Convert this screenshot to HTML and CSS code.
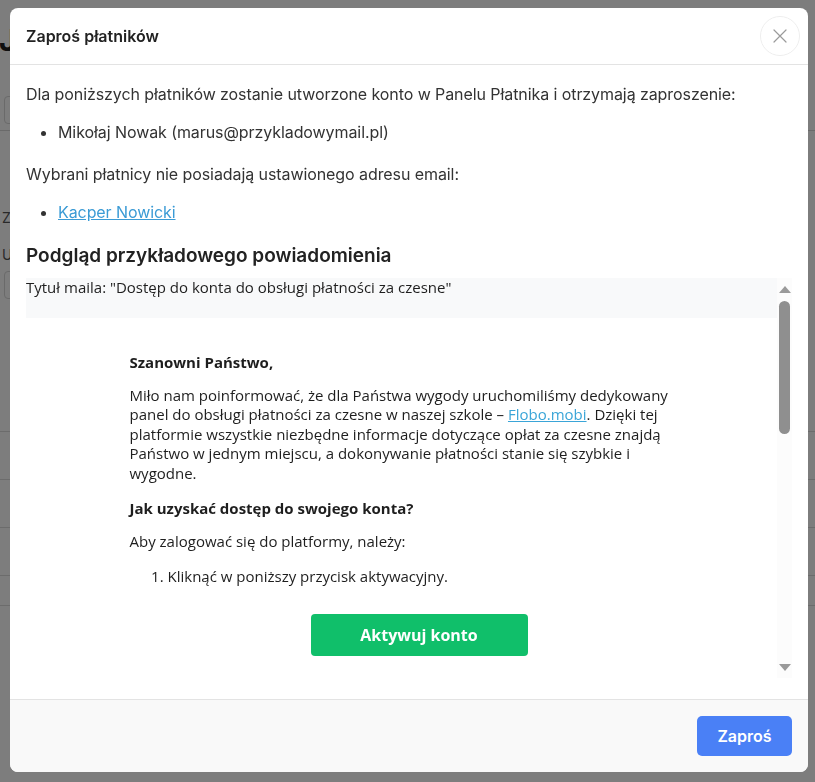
FILE: index.html
```html
<!DOCTYPE html>
<html lang="pl">
<head>
<meta charset="utf-8">
<title>Zaproś płatników</title>
<link rel="stylesheet" href="styles.css">
</head>
<body>
<div class="page">
  <h1 class="page-title">Jakub</h1>
  <div class="page-field"></div>
  <div class="page-rule"></div>
  <div class="page-label">Z</div>
  <div class="page-label small">U</div>
  <div class="page-field second"></div>
  <div class="page-rows">
    <div class="page-row"></div>
    <div class="page-row"></div>
    <div class="page-row"></div>
    <div class="page-row"></div>
    <div class="page-row last"></div>
  </div>
</div>
<div class="backdrop"></div>
<div class="modal">
  <div class="modal-header">
    <h2 class="modal-title">Zaproś płatników</h2>
    <button class="close-btn" aria-label="Zamknij">
      <svg width="16" height="16" viewBox="0 0 16 16"><path d="M2 2 L14 14 M14 2 L2 14" stroke="#9a9a9a" stroke-width="1.2" fill="none" stroke-linecap="round"/></svg>
    </button>
  </div>
  <div class="modal-body">
    <p class="info">Dla poniższych płatników zostanie utworzone konto w Panelu Płatnika i otrzymają zaproszenie:</p>
    <ul class="list">
      <li>Mikołaj Nowak (marus@przykladowymail.pl)</li>
    </ul>
    <p class="info">Wybrani płatnicy nie posiadają ustawionego adresu email:</p>
    <ul class="list">
      <li><a href="#" class="link">Kacper Nowicki</a></li>
    </ul>
    <h3 class="section-title">Podgląd przykładowego powiadomienia</h3>
    <div class="preview">
      <div class="preview-content">
        <div class="subject">Tytuł maila: "Dostęp do konta do obsługi płatności za czesne"</div>
        <div class="email">
          <p class="email-strong first">Szanowni Państwo,</p>
          <p class="email-p long">Miło nam poinformować, że dla Państwa wygody uruchomiliśmy dedykowany panel do obsługi płatności za czesne w naszej szkole – <a href="#" class="email-link">Flobo.mobi</a>. Dzięki tej platformie wszystkie niezbędne informacje dotyczące opłat za czesne znajdą Państwo w jednym miejscu, a dokonywanie płatności stanie się szybkie i wygodne.</p>
          <p class="email-strong">Jak uzyskać dostęp do swojego konta?</p>
          <p class="email-p">Aby zalogować się do platformy, należy:</p>
          <ol class="email-list">
            <li>Kliknąć w poniższy przycisk aktywacyjny.</li>
          </ol>
          <div class="cta-row"><a href="#" class="cta">Aktywuj konto</a></div>
        </div>
      </div>
      <div class="scrollbar">
        <span class="arrow up"></span>
        <div class="thumb"></div>
        <div class="spacer"></div>
        <span class="arrow down"></span>
      </div>
    </div>
  </div>
  <div class="modal-footer">
    <button class="primary-btn">Zaproś</button>
  </div>
</div>
</body>
</html>
```
FILE: styles.css
```css
* { box-sizing: border-box; }
html, body { margin: 0; padding: 0; }
body {
  width: 815px;
  height: 782px;
  overflow: hidden;
  background: #ffffff;
  font-family: Inter, "Liberation Sans", sans-serif;
  color: #333;
}

/* background page */
.page {
  padding: 22px 0 0 0;
}
.page-title {
  margin: 0 0 0 -1px;
  font-size: 30px;
  font-weight: 700;
  color: #222;
  line-height: 36px;
}
.page-field {
  margin: 38px 0 0 4px;
  width: 300px;
  height: 28px;
  border: 1px solid #d8d8d8;
  border-radius: 4px;
}
.page-field.second { margin-top: 8px; }
.page-rule {
  margin-top: 6px;
  height: 1px;
  background: #d8d8d8;
}
.page-label {
  margin: 78px 0 0 2px;
  font-size: 14px;
  color: #555;
}
.page-label.small { margin-top: 20px; }
.page-rows { margin-top: 85px; }
.page-row {
  height: 48px;
  border-bottom: 1px solid #dcdcdc;
}
.page-row.last { height: 30px; }

.backdrop {
  position: fixed;
  inset: 0;
  background: rgba(0, 0, 0, 0.51);
}

/* modal */
.modal {
  position: fixed;
  top: 8px;
  left: 10px;
  width: 798px;
  height: 764px;
  background: #fff;
  border-radius: 8px;
  display: flex;
  flex-direction: column;
  overflow: hidden;
}
.modal-header {
  height: 57px;
  flex: none;
  display: flex;
  align-items: center;
  justify-content: space-between;
  padding: 0 8px 0 16px;
  border-bottom: 1px solid #e3e3e3;
}
.modal-title {
  margin: 0;
  font-size: 16px;
  font-weight: 600;
  color: #222;
}
.close-btn {
  width: 40px;
  height: 40px;
  border-radius: 50%;
  border: 1px solid #eeeeee;
  background: #fff;
  display: flex;
  align-items: center;
  justify-content: center;
  padding: 0;
  margin-top: -1px;
}

.modal-body {
  flex: 1;
  padding: 17px 16px 0 16px;
}
.info {
  margin: 0;
  font-size: 16px;
  line-height: 24px;
  letter-spacing: -0.08px;
  color: #333;
}
.list {
  margin: 14px 0 18px 0;
  padding-left: 32px;
  font-size: 16px;
  line-height: 24px;
  letter-spacing: -0.08px;
  color: #333;
}
.link {
  color: #3b9bd5;
  text-decoration: underline;
}
.section-title {
  margin: 16px 0 8px 0;
  font-size: 19px;
  line-height: 28px;
  font-weight: 600;
  color: #222;
}

/* email preview */
.preview {
  height: 400px;
  display: flex;
  overflow: hidden;
}
.preview-content {
  flex: 1;
  overflow: hidden;
  font-family: "Open Sans", "Liberation Sans", sans-serif;
  font-size: 15px;
  line-height: 19.6px;
  color: #1e1e1e;
}
.subject {
  background: #f8f9fa;
  height: 40px;
  line-height: 17px;
  padding-top: 1px;
}
.email {
  width: 540px;
  margin: 35px auto 0 auto;
  position: relative;
  left: -2px;
}
.email-strong {
  margin: 0 0 14px 0;
  font-weight: 700;
}
.email-strong.first { margin-bottom: 13px; }
.email-p.long { margin-bottom: 15px; }
.email-p {
  margin: 0 0 15px 0;
}
.email-link {
  color: #3aa5d8;
  text-decoration: underline;
}
.email-list {
  margin: 0;
  padding-left: 38px;
}
.cta-row {
  padding: 28px 0 48px 181px;
}
.cta {
  display: flex;
  align-items: center;
  justify-content: center;
  width: 217px;
  height: 42px;
  background: #10bf6a;
  color: #fff;
  font-weight: 700;
  font-size: 16px;
  border-radius: 4px;
  text-decoration: none;
}

.scrollbar {
  width: 15px;
  flex: none;
  display: flex;
  flex-direction: column;
  align-items: center;
  padding: 8px 0 7px 0;
  background: #fcfcfc;
}
.arrow {
  width: 0;
  height: 0;
  border-left: 6px solid transparent;
  border-right: 6px solid transparent;
}
.arrow.up { border-bottom: 7px solid #9a9a9a; }
.arrow.down { border-top: 7px solid #9a9a9a; }
.thumb {
  margin-top: 8px;
  width: 11px;
  height: 133px;
  background: #8f8f8f;
  border-radius: 6px;
}
.spacer { flex: 1; }

.modal-footer {
  height: 73px;
  flex: none;
  border-top: 1px solid #e3e3e3;
  background: #f9f9f9;
  display: flex;
  align-items: center;
  justify-content: flex-end;
  padding: 0 16px;
}
.primary-btn {
  width: 95px;
  height: 40px;
  border: none;
  border-radius: 5px;
  background: #4a80f6;
  color: #fff;
  font-family: Inter, "Liberation Sans", sans-serif;
  font-size: 16px;
  font-weight: 600;
}
```
